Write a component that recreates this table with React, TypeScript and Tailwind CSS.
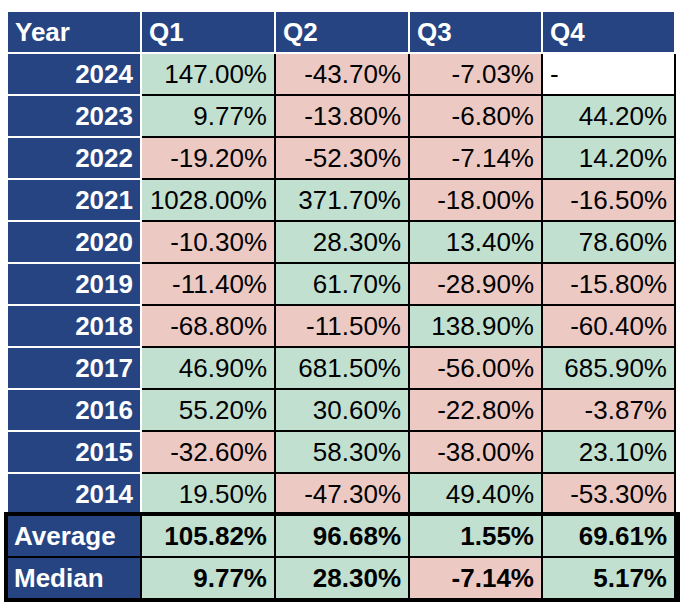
import React from "react"

const ROWS: [string, (string | null)[]][] = [
  ["2024", ["147.00%", "-43.70%", "-7.03%", null]],
  ["2023", ["9.77%", "-13.80%", "-6.80%", "44.20%"]],
  ["2022", ["-19.20%", "-52.30%", "-7.14%", "14.20%"]],
  ["2021", ["1028.00%", "371.70%", "-18.00%", "-16.50%"]],
  ["2020", ["-10.30%", "28.30%", "13.40%", "78.60%"]],
  ["2019", ["-11.40%", "61.70%", "-28.90%", "-15.80%"]],
  ["2018", ["-68.80%", "-11.50%", "138.90%", "-60.40%"]],
  ["2017", ["46.90%", "681.50%", "-56.00%", "685.90%"]],
  ["2016", ["55.20%", "30.60%", "-22.80%", "-3.87%"]],
  ["2015", ["-32.60%", "58.30%", "-38.00%", "23.10%"]],
  ["2014", ["19.50%", "-47.30%", "49.40%", "-53.30%"]],
]

const SUMMARY: [string, string[]][] = [
  ["Average", ["105.82%", "96.68%", "1.55%", "69.61%"]],
  ["Median", ["9.77%", "28.30%", "-7.14%", "5.17%"]],
]

const COLS = "grid grid-cols-[134px_134px_134px_133px_133px]"

function ValueCell({ value, bold, last }: { value: string | null; bold?: boolean; last?: boolean }) {
  if (value === null) {
    return (
      <div className="h-[42px] bg-white border-r-2 border-b-2 border-black flex items-center pl-[7px]">
        -
      </div>
    )
  }
  const neg = value.startsWith("-")
  return (
    <div
      className={`flex items-center justify-end pr-[7px] border-r-2 border-black ${
        last ? "h-[40px]" : "h-[42px] border-b-2"
      } ${neg ? "bg-[#edc9c3]" : "bg-[#c1e0cf]"} ${bold ? "font-bold" : ""}`}
    >
      {value}
    </div>
  )
}

export default function App() {
  return (
    <div
      className="bg-white w-[694px] h-[614px] pl-[8px] pt-[12px] text-[26px] leading-none text-black"
      style={{ fontFamily: '"Liberation Sans", Arial, sans-serif' }}
    >
      {/* header */}
      <div className={COLS}>
        {["Year", "Q1", "Q2", "Q3", "Q4"].map((h) => (
          <div
            key={h}
            className="h-[42px] bg-[#264482] border-r-2 border-b-2 border-white text-white font-bold flex items-center pl-[7px]"
          >
            {h}
          </div>
        ))}
      </div>

      {/* yearly rows */}
      {ROWS.map(([year, vals]) => (
        <div key={year} className={COLS}>
          <div className="h-[42px] bg-[#264482] border-r-2 border-b-2 border-white text-white font-bold flex items-center justify-end pr-[7px]">
            {year}
          </div>
          {vals.map((v, i) => (
            <ValueCell key={i} value={v} />
          ))}
        </div>
      ))}

      {/* summary */}
      <div className="w-[668px] outline-4 outline-black">
        {SUMMARY.map(([label, vals], r) => {
          const last = r === SUMMARY.length - 1
          return (
            <div key={label} className={COLS}>
              <div
                className={`bg-[#264482] border-r-2 border-black text-white font-bold flex items-center pl-[6px] ${
                  last ? "h-[40px]" : "h-[42px] border-b-2"
                }`}
              >
                {label}
              </div>
              {vals.map((v, i) => (
                <ValueCell key={i} value={v} bold last={last} />
              ))}
            </div>
          )
        })}
      </div>
    </div>
  )
}
